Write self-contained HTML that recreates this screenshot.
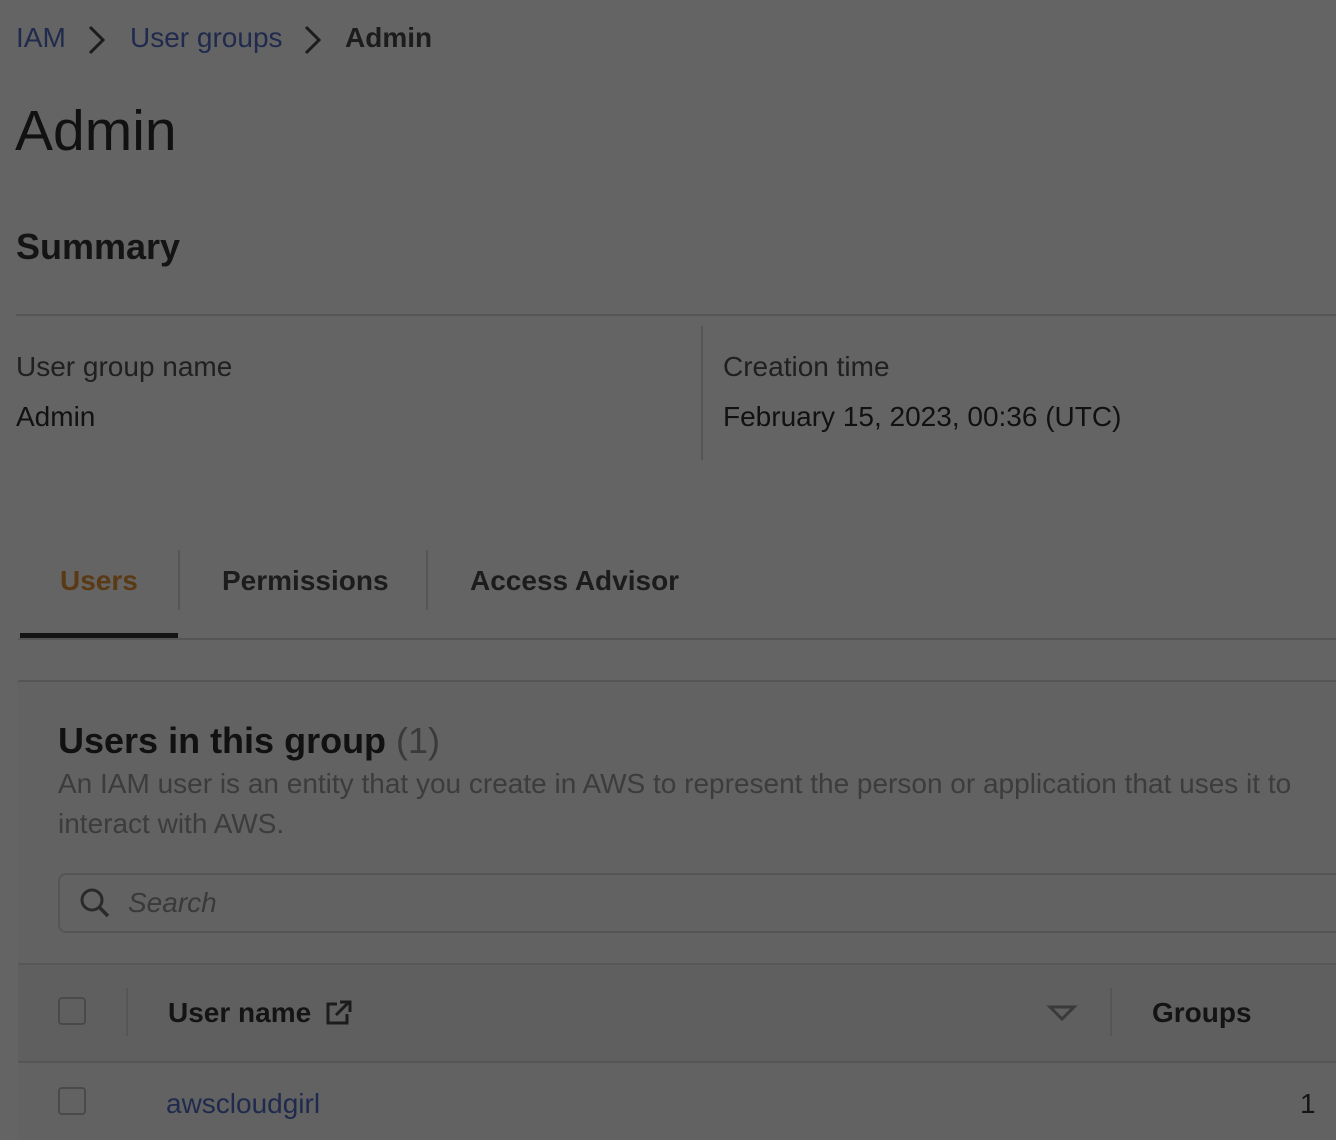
<!DOCTYPE html>
<html><head><meta charset="utf-8"><style>
*{margin:0;padding:0;box-sizing:border-box}
body{width:1336px;height:1140px;background:#646464;font-family:"Liberation Sans",Arial,sans-serif;position:relative;overflow:hidden;color:#141414}
.a{position:absolute;white-space:nowrap}
</style></head><body>
<div class="a" style="left:16px;top:22px;font-size:28px;color:#1f2a4d">IAM</div>
<svg class="a" style="left:86px;top:24px" width="22" height="32"><path d="M4 3 L17 16 L4 29" fill="none" stroke="#1c1c1c" stroke-width="3"/></svg>
<div class="a" style="left:130px;top:22px;font-size:28px;color:#1f2a4d">User groups</div>
<svg class="a" style="left:302px;top:24px" width="22" height="32"><path d="M4 3 L17 16 L4 29" fill="none" stroke="#1c1c1c" stroke-width="3"/></svg>
<div class="a" style="left:345px;top:22px;font-size:28px;font-weight:bold;color:#1c1c1c">Admin</div>
<div class="a" style="left:15px;top:98px;font-size:57px;color:#111">Admin</div>
<div class="a" style="left:16px;top:226px;font-size:36px;font-weight:bold;color:#141414">Summary</div>
<div class="a" style="left:16px;top:314px;width:1320px;height:2px;background:#555"></div>
<div class="a" style="left:701px;top:326px;width:2px;height:134px;background:#555"></div>
<div class="a" style="left:16px;top:351px;font-size:28px;color:#202020">User group name</div>
<div class="a" style="left:16px;top:401px;font-size:28px;color:#111">Admin</div>
<div class="a" style="left:723px;top:351px;font-size:28px;color:#202020">Creation time</div>
<div class="a" style="left:723px;top:401px;font-size:28px;color:#111">February 15, 2023, 00:36 (UTC)</div>
<div class="a" style="left:60px;top:565px;font-size:28px;font-weight:bold;color:#5a3a14">Users</div>
<div class="a" style="left:178px;top:550px;width:2px;height:60px;background:#555"></div>
<div class="a" style="left:222px;top:565px;font-size:28px;font-weight:bold;color:#1c1c1c">Permissions</div>
<div class="a" style="left:426px;top:550px;width:2px;height:60px;background:#555"></div>
<div class="a" style="left:470px;top:565px;font-size:28px;font-weight:bold;color:#1c1c1c">Access Advisor</div>
<div class="a" style="left:20px;top:633px;width:158px;height:5px;background:#141414"></div>
<div class="a" style="left:18px;top:638px;width:1318px;height:2px;background:#555"></div>
<div class="a" style="left:18px;top:680px;width:1318px;height:460px;background:#626262;border-top:2px solid #555"></div>
<div class="a" style="left:58px;top:720px;font-size:36px;font-weight:bold;color:#111">Users in this group <span style="font-weight:normal;color:#3a3a3a">(1)</span></div>
<div class="a" style="left:58px;top:768px;font-size:28px;color:#3c3c3c">An IAM user is an entity that you create in AWS to represent the person or application that uses it to</div>
<div class="a" style="left:58px;top:808px;font-size:28px;color:#3c3c3c">interact with AWS.</div>
<div class="a" style="left:58px;top:873px;width:1300px;height:60px;border:2px solid #555;border-radius:8px"></div>
<svg class="a" style="left:78px;top:886px" width="34" height="34"><circle cx="14" cy="14" r="10" fill="none" stroke="#2a2a2a" stroke-width="3"/><path d="M21 21 L30 30" stroke="#2a2a2a" stroke-width="3.5"/></svg>
<div class="a" style="left:128px;top:887px;font-size:28px;font-style:italic;color:#3a3a3a">Search</div>
<div class="a" style="left:18px;top:963px;width:1318px;height:100px;background:#5f5f5f;border-top:2px solid #575757;border-bottom:2px solid #555"></div>
<div class="a" style="left:58px;top:997px;width:28px;height:28px;border:2px solid #4a4a4a;border-radius:4px"></div>
<div class="a" style="left:126px;top:988px;width:2px;height:48px;background:#555"></div>
<div class="a" style="left:168px;top:997px;font-size:28px;font-weight:bold;color:#141414">User name</div>
<svg class="a" style="left:324px;top:999px" width="30" height="28"><path d="M13 5 H4 V24 H23 V15" fill="none" stroke="#1c1c1c" stroke-width="3"/><path d="M12 16 L25 3 M16 3 H26 V13" fill="none" stroke="#1c1c1c" stroke-width="3"/></svg>
<svg class="a" style="left:1046px;top:1004px" width="32" height="20"><path d="M4 3 H28 L16 15 Z" fill="none" stroke="#3a3a3a" stroke-width="3"/></svg>
<div class="a" style="left:1110px;top:988px;width:2px;height:48px;background:#555"></div>
<div class="a" style="left:1152px;top:997px;font-size:28px;font-weight:bold;color:#141414">Groups</div>
<div class="a" style="left:58px;top:1087px;width:28px;height:28px;border:2px solid #4a4a4a;border-radius:4px"></div>
<div class="a" style="left:166px;top:1088px;font-size:28px;color:#1f2a4d">awscloudgirl</div>
<div class="a" style="left:1300px;top:1088px;font-size:28px;color:#141414">1</div>
</body></html>
